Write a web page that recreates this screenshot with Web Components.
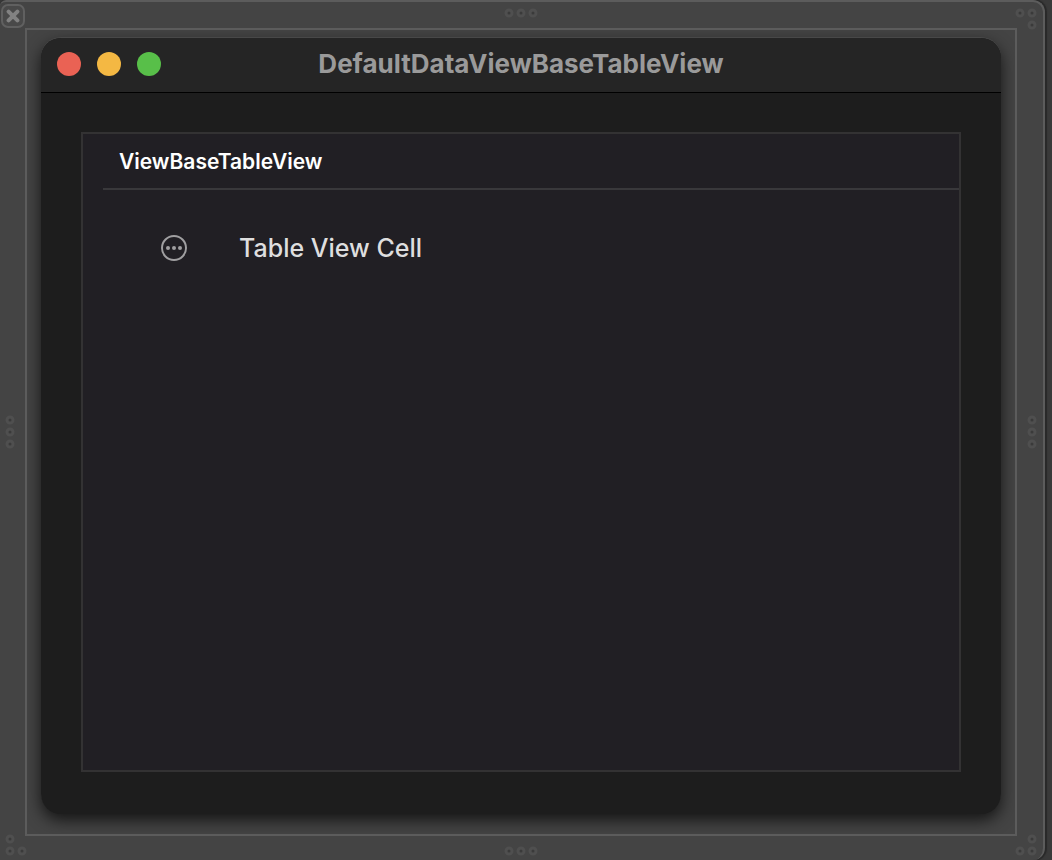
<!DOCTYPE html>
<html lang="en">
<head>
<meta charset="utf-8">
<title>DefaultDataViewBaseTableView</title>
<meta name="viewport" content="width=device-width, initial-scale=1">
<style>
  html { background: #393939; }
  body { margin: 0; font-family: Inter, "Liberation Sans", sans-serif; color: #dededf; }
</style>
</head>
<body>
<editor-frame>
  <app-window heading="DefaultDataViewBaseTableView">
    <data-table column="ViewBaseTableView" cell="Table View Cell"></data-table>
  </app-window>
</editor-frame>

<script>
// Resize grip: a set of small rings, along an edge or round a corner.
class ResizeGrip extends HTMLElement {
  connectedCallback() {
    const sets = {
      row: [32, 8, [[4, 4], [16, 4], [28, 4]]],
      column: [8, 32, [[4, 4], [4, 16], [4, 28]]],
      'top-right': [20, 20, [[4, 4], [16, 4], [16, 16]]],
      'bottom-left': [20, 20, [[4, 4], [4, 16], [16, 16]]],
      'bottom-right': [20, 20, [[16, 4], [4, 16], [16, 16]]]
    };
    const [w, h, points] = sets[this.getAttribute('kind')];
    this.attachShadow({ mode: 'open' }).innerHTML = `
      <style>
        :host { display: block; }
        svg { display: block; }
        circle { fill: #3a3a3a; stroke: #4f4f4f; stroke-width: 3; }
      </style>
      <svg width="${w}" height="${h}" viewBox="0 0 ${w} ${h}" overflow="visible" aria-hidden="true">
        ${points.map(([x, y]) => `<circle cx="${x}" cy="${y}" r="3"/>`).join('')}
      </svg>`;
  }
}
customElements.define('resize-grip', ResizeGrip);

class EditorFrame extends HTMLElement {
  constructor() {
    super();
    this.attachShadow({ mode: 'open' }).innerHTML = `
      <style>
        :host {
          display: grid;
          grid-template-columns: 25px minmax(0, 1fr) 26px;
          grid-template-rows: 26px 1fr 24px;
          box-sizing: border-box;
          min-height: 100vh;
          margin-right: 7px;
          background: #444;
          border: 0 solid #5c5c5c;
          border-width: 2px 2px 0 0;
          border-radius: 6px 12px 12px 0;
          box-shadow: 1px 0 1px 1px #292929;
        }
        button {
          display: grid;
          place-items: center;
          box-sizing: border-box;
          width: 24px;
          height: 24px;
          margin: 2px 0 0 1px;
          padding: 0;
          background: #494949;
          border: 2px solid #606060;
          border-radius: 7px;
        }
        .edge { place-self: center; }
        .left { justify-self: start; margin-left: 6px; }
        .right { justify-self: end; margin-right: 7px; }
        .top { align-self: start; margin-top: 7px; }
        .bottom { align-self: end; margin-bottom: 5px; }
        .canvas {
          display: grid;
          padding: 8px 14px 20px;
          border: 2px solid #5c5c5c;
          overflow: hidden;
        }
      </style>
      <button type="button" aria-label="Close">
        <svg width="14" height="14" viewBox="0 0 14 14" aria-hidden="true">
          <path d="M2.6 2.6 11.4 11.4M11.4 2.6 2.6 11.4" stroke="#828282" stroke-width="4" stroke-linecap="round"/>
        </svg>
      </button>
      <resize-grip class="edge top" kind="row"></resize-grip>
      <resize-grip class="right top" kind="top-right"></resize-grip>
      <resize-grip class="edge left" kind="column"></resize-grip>
      <div class="canvas"><slot></slot></div>
      <resize-grip class="edge right" kind="column"></resize-grip>
      <resize-grip class="left bottom" kind="bottom-left"></resize-grip>
      <resize-grip class="edge bottom" kind="row"></resize-grip>
      <resize-grip class="right bottom" kind="bottom-right"></resize-grip>`;
  }
}
customElements.define('editor-frame', EditorFrame);

class AppWindow extends HTMLElement {
  connectedCallback() {
    this.attachShadow({ mode: 'open' }).innerHTML = `
      <style>
        :host {
          display: flex;
          flex-direction: column;
          background: #1d1d1d;
          border-radius: 20px;
          box-shadow: 0 -1px 0 #484848, 0 6px 16px rgba(0, 0, 0, .7);
        }
        header {
          display: grid;
          grid-template-columns: 1fr auto 1fr;
          align-items: center;
          box-sizing: border-box;
          height: 55px;
          padding: 0 16px 2px;
          background: #252525;
          border-bottom: 1px solid #000;
          border-radius: 20px 20px 0 0;
        }
        .controls { display: flex; gap: 16px; }
        button { width: 24px; height: 24px; padding: 0; border: 0; border-radius: 50%; }
        .close { background: #ea6254; }
        .minimize { background: #f4b843; }
        .zoom { background: #58bf49; }
        h1 { margin: 0; font-size: 26px; line-height: 32px; font-weight: 700; color: #9a9a9a; }
        main { flex: 1; display: grid; padding: 39px 40px 42px; }
      </style>
      <header>
        <div class="controls">
          <button class="close" type="button" aria-label="Close window"></button>
          <button class="minimize" type="button" aria-label="Minimize window"></button>
          <button class="zoom" type="button" aria-label="Zoom window"></button>
        </div>
        <h1></h1>
      </header>
      <main><slot></slot></main>`;
    this.shadowRoot.querySelector('h1').textContent = this.getAttribute('heading');
  }
}
customElements.define('app-window', AppWindow);

class DataTable extends HTMLElement {
  connectedCallback() {
    this.attachShadow({ mode: 'open' }).innerHTML = `
      <style>
        :host { display: block; padding-left: 20px; background: #211f24; border: 2px solid #333233; }
        table { width: 100%; border-spacing: 0; text-align: left; }
        th {
          height: 52px;
          padding: 2px 0 0 16px;
          border-bottom: 2px solid #39383b;
          font-size: 21px;
          line-height: 28px;
          font-weight: 600;
          color: #fff;
        }
        td { height: 116px; padding: 0; font-size: 25px; line-height: 32px; font-weight: 500; }
        .icon { width: 78px; padding-left: 58px; }
        svg { display: block; }
      </style>
      <table>
        <thead><tr><th colspan="2" scope="col"></th></tr></thead>
        <tbody><tr>
          <td class="icon">
            <svg width="26" height="26" viewBox="0 0 26 26" fill="#a09fa1" aria-hidden="true">
              <circle cx="13" cy="13" r="12" fill="none" stroke="#a09fa1" stroke-width="2"/>
              <circle cx="7" cy="13" r="2"/><circle cx="13" cy="13" r="2"/><circle cx="19" cy="13" r="2"/>
            </svg>
          </td>
          <td class="label"></td>
        </tr></tbody>
      </table>`;
    this.shadowRoot.querySelector('th').textContent = this.getAttribute('column');
    this.shadowRoot.querySelector('.label').textContent = this.getAttribute('cell');
  }
}
customElements.define('data-table', DataTable);
</script>
</body>
</html>
